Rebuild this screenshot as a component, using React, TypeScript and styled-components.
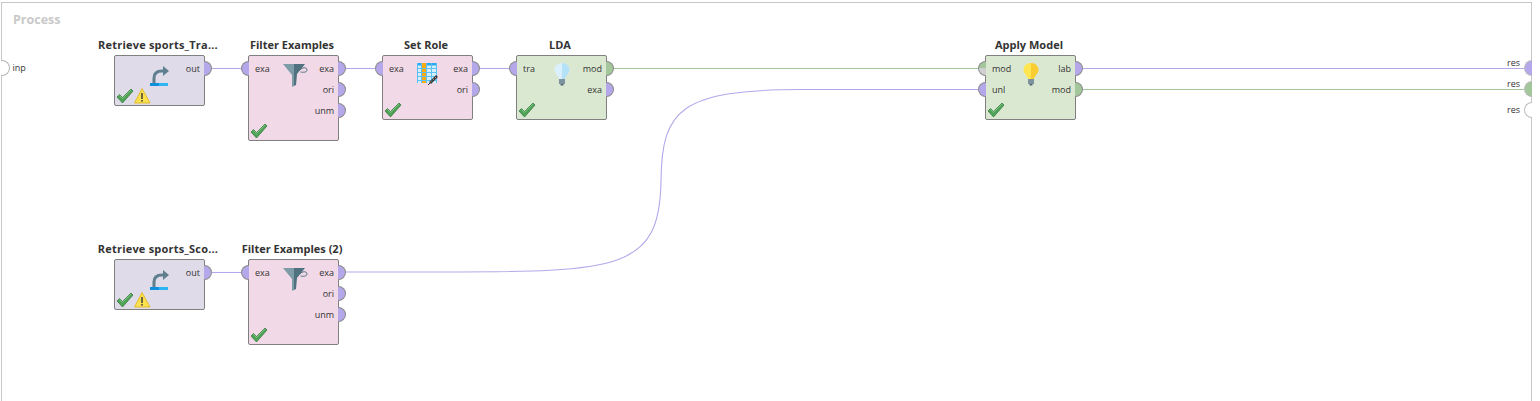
import React from "react";
import styled, { createGlobalStyle, css } from "styled-components";

type PortKind = "example" | "model" | "mixed" | "empty";
type NodeKind = "data" | "blending" | "modeling";
type IconName = "retrieve" | "filter" | "role" | "bulbBlue" | "bulbYellow";

interface IPort {
  label: string;
  kind: PortKind;
}

interface IOperator {
  title: string;
  x: number;
  y: number;
  height: number;
  kind: NodeKind;
  icon: IconName;
  warn?: boolean;
  inputs: IPort[];
  outputs: IPort[];
}

const ex = (label: string): IPort => ({ label, kind: "example" });

const operators: IOperator[] = [
  { title: "Retrieve sports_Tra...", x: 114, y: 55, height: 51, kind: "data", icon: "retrieve", warn: true, inputs: [], outputs: [ex("out")] },
  { title: "Filter Examples", x: 248, y: 55, height: 86, kind: "blending", icon: "filter", inputs: [ex("exa")], outputs: [ex("exa"), ex("ori"), ex("unm")] },
  { title: "Set Role", x: 382, y: 55, height: 65, kind: "blending", icon: "role", inputs: [ex("exa")], outputs: [ex("exa"), ex("ori")] },
  { title: "LDA", x: 516, y: 55, height: 65, kind: "modeling", icon: "bulbBlue", inputs: [ex("tra")], outputs: [{ label: "mod", kind: "model" }, ex("exa")] },
  { title: "Apply Model", x: 985, y: 55, height: 65, kind: "modeling", icon: "bulbYellow", inputs: [{ label: "mod", kind: "mixed" }, ex("unl")], outputs: [ex("lab"), { label: "mod", kind: "model" }] },
  { title: "Retrieve sports_Sco...", x: 114, y: 259, height: 51, kind: "data", icon: "retrieve", warn: true, inputs: [], outputs: [ex("out")] },
  { title: "Filter Examples (2)", x: 248, y: 259, height: 86, kind: "blending", icon: "filter", inputs: [ex("exa")], outputs: [ex("exa"), ex("ori"), ex("unm")] },
];

const sinks: { y: number; kind: PortKind; labelLift: number }[] = [
  { y: 68, kind: "example", labelLift: 5 },
  { y: 89, kind: "model", labelLift: 5 },
  { y: 110, kind: "empty", labelLift: 0 },
];

const PURPLE = "#b5a8ea";
const GREEN = "#a3c79a";

const GlobalStyle = createGlobalStyle`
  html, body {
    margin: 0;
    padding: 0;
    background: #ffffff;
    overflow: hidden;
  }
  body {
    font-family: "Open Sans", "Liberation Sans", sans-serif;
  }
`;

const Canvas = styled.main`
  position: relative;
  width: 1540px;
  height: 401px;
  background: #ffffff;
  overflow: hidden;
`;

const Frame = styled.div`
  position: absolute;
  left: 1px;
  top: 2px;
  width: 1531px;
  height: 399px;
  border-top: 1px solid #c8c8c8;
  border-left: 1px solid #c8c8c8;
  border-right: 1px solid #c8c8c8;
  box-sizing: border-box;
`;

const ProcessTitle = styled.h1`
  position: absolute;
  left: 13px;
  top: 12px;
  margin: 0;
  font-size: 12.5px;
  line-height: 16px;
  font-weight: 700;
  color: #c9c9c9;
`;

const Wires = styled.svg`
  position: absolute;
  left: 0;
  top: 0;
`;

const OperatorBox = styled.section<{ $x: number; $y: number }>`
  position: absolute;
  left: ${({ $x }) => $x}px;
  top: ${({ $y }) => $y - 18}px;
  width: 91px;
  display: flex;
  flex-direction: column;
  align-items: center;
`;

const OperatorTitle = styled.h2<{ $truncated: boolean }>`
  margin: 0;
  height: 18px;
  padding-right: 3px;
  font-size: 11px;
  line-height: 15px;
  font-weight: 700;
  letter-spacing: ${({ $truncated }) => ($truncated ? "0.2px" : "0")};
  color: #333333;
  white-space: nowrap;
`;

const nodeFills: Record<NodeKind, string> = {
  data: "#dfdbe9",
  blending: "#f1d9e7",
  modeling: "#dbe8d1",
};

const OperatorBody = styled.div<{ $kind: NodeKind; $height: number }>`
  position: relative;
  box-sizing: border-box;
  width: 91px;
  height: ${({ $height }) => $height}px;
  padding-top: 2px;
  display: flex;
  justify-content: space-between;
  background: ${({ $kind }) => nodeFills[$kind]};
  border: 1px solid #808080;
  border-radius: 2px;
`;

const PortColumn = styled.div`
  display: flex;
  flex-direction: column;
`;

const PortRow = styled.div<{ $side: "in" | "out" }>`
  position: relative;
  height: 21px;
  display: flex;
  align-items: center;
  font-size: 9px;
  color: #333333;
  ${({ $side }) =>
    $side === "in"
      ? css`
          padding-left: 6px;
          justify-content: flex-start;
        `
      : css`
          padding-right: 4px;
          justify-content: flex-end;
        `}
`;

const portFill = (kind: PortKind) => {
  if (kind === "model") return GREEN;
  if (kind === "mixed") return `linear-gradient(${GREEN} 50%, #cfcfcf 50%)`;
  if (kind === "empty") return "#ffffff";
  return PURPLE;
};

const PortDot = styled.span<{ $side: "in" | "out"; $kind: PortKind }>`
  position: absolute;
  top: 3px;
  box-sizing: border-box;
  width: 8px;
  height: 15px;
  background: ${({ $kind }) => portFill($kind)};
  border: 1px solid #8c8c8c;
  ${({ $side }) =>
    $side === "in"
      ? css`
          left: -8px;
          border-right: 0;
          border-radius: 8px 0 0 8px;
        `
      : css`
          right: -8px;
          border-left: 0;
          border-radius: 0 8px 8px 0;
        `}
`;

const IconSlot = styled.div`
  position: absolute;
  left: 33px;
  top: 6px;
  width: 24px;
  height: 24px;
`;

const StatusRow = styled.div`
  position: absolute;
  left: 1px;
  bottom: 1px;
  display: flex;
  align-items: flex-end;
`;

const InputPortLabel = styled.span`
  position: absolute;
  left: 12.5px;
  top: 61px;
  font-size: 9px;
  line-height: 14px;
  color: #333333;
`;

const InputPort = styled.span`
  position: absolute;
  left: 1px;
  top: 60px;
  box-sizing: border-box;
  width: 9px;
  height: 16px;
  background: #ffffff;
  border: 1.5px solid #b5b5b5;
  border-left: 0;
  border-radius: 0 8px 8px 0;
`;

const SinkLabel = styled.span<{ $y: number }>`
  position: absolute;
  right: 20px;
  top: ${({ $y }) => $y - 7}px;
  font-size: 9px;
  line-height: 14px;
  color: #333333;
`;

const SinkPort = styled.span<{ $y: number; $kind: PortKind }>`
  position: absolute;
  left: 1524px;
  top: ${({ $y }) => $y - 8}px;
  box-sizing: border-box;
  width: 8px;
  height: 16px;
  background: ${({ $kind }) => portFill($kind)};
  border: 1.5px solid #bdbdbd;
  border-right: 0;
  border-radius: 8px 0 0 8px;
`;

const Check = () => (
  <svg width="18" height="16" viewBox="0 0 18 16">
    <path
      d="M1 9 L3.5 6.5 L6.5 9.5 L15 1 L17 3 L6.5 15 Z"
      fill="#4fa356"
      stroke="#3b7d45"
      strokeWidth="0.8"
      strokeLinejoin="round"
    />
    <path d="M3.5 7.5 L6.5 10.5 L15 2" fill="none" stroke="#7cc47f" strokeWidth="1" />
  </svg>
);

const Warning = () => (
  <svg width="17" height="16" viewBox="0 0 17 16">
    <path d="M8 .5 L16 15 L.5 15 Z" fill="#fbe04f" stroke="#e3bd2c" strokeLinejoin="round" />
    <rect x="7.2" y="5" width="1.6" height="6" fill="#4a4a3a" />
    <rect x="7.2" y="12" width="1.6" height="1.6" fill="#4a4a3a" />
  </svg>
);

const RetrieveIcon = () => (
  <svg width="24" height="24" viewBox="0 0 24 24">
    <path d="M6 21 V16 C6 12 8 9 14 9 H16" fill="none" stroke="#5f7f8f" strokeWidth="3" />
    <path d="M15 4 L21 9 L15 14 Z" fill="#5f7f8f" />
    <rect x="2" y="21" width="9" height="3" fill="#0f8fdc" />
    <rect x="11" y="21" width="9" height="3" fill="#2eb6f4" />
  </svg>
);

const FilterIcon = () => (
  <svg width="24" height="24" viewBox="0 0 24 24" overflow="visible">
    <path d="M1 2 H12 V24 L10 25 V13 Z" fill="#7d9ca8" />
    <path d="M12 2 H23 L15 12 L14 23 L12 24 Z" fill="#50717f" />
    <path d="M18 8 C20 5 25 5 25 8 C25 10.5 21 10.5 18.5 10" fill="none" stroke="#50717f" strokeWidth="1" />
  </svg>
);

const RoleIcon = () => (
  <svg width="24" height="24" viewBox="0 0 24 24">
    <rect x="1" y="1" width="20" height="20" fill="#d5eefc" />
    <rect x="1" y="1" width="20" height="2.5" fill="#29a9ee" />
    <rect x="5" y="1" width="5" height="20" fill="#f9ab10" />
    {[6, 10, 14, 18].map((y) => (
      <rect key={y} x="1" y={y} width="20" height="1" fill="#5cc0f4" />
    ))}
    {[1, 5, 10, 15, 20].map((x) => (
      <rect key={x} x={x} y="1" width="1" height="20" fill="#5cc0f4" />
    ))}
    <path d="M14 21 L21 14" stroke="#333333" strokeWidth="2.6" />
    <path d="M14.5 20 L20.5 14.5" stroke="#ffffff" strokeWidth="0.7" strokeDasharray="1.5 1.5" />
    <path d="M12 23 L14 21" stroke="#333333" strokeWidth="1" />
  </svg>
);

const Bulb = ({ left, right }: { left: string; right: string }) => (
  <svg width="24" height="24" viewBox="0 0 24 24">
    <path d="M12 1 C7 1 4.5 4.5 4.5 8 C4.5 11.5 8 13 9 17 H12 Z" fill={left} />
    <path d="M12 1 C17 1 19.5 4.5 19.5 8 C19.5 11.5 16 13 15 17 H12 Z" fill={right} />
    <rect x="9" y="17" width="6" height="5" fill="#7c939d" />
    <rect x="10.5" y="22" width="3" height="1.5" fill="#4f6670" />
  </svg>
);

const icons: Record<IconName, React.ReactNode> = {
  retrieve: <RetrieveIcon />,
  filter: <FilterIcon />,
  role: <RoleIcon />,
  bulbBlue: <Bulb left="#daf0fc" right="#b5e1f8" />,
  bulbYellow: <Bulb left="#ffe650" right="#f9cd32" />,
};

const Operator: React.FC<{ op: IOperator }> = ({ op }) => (
  <OperatorBox $x={op.x} $y={op.y}>
    <OperatorTitle $truncated={op.title.endsWith("...")}>{op.title}</OperatorTitle>
    <OperatorBody $kind={op.kind} $height={op.height}>
      <PortColumn>
        {op.inputs.map((port) => (
          <PortRow key={port.label} $side="in">
            <PortDot $side="in" $kind={port.kind} />
            {port.label}
          </PortRow>
        ))}
      </PortColumn>
      <IconSlot>{icons[op.icon]}</IconSlot>
      <PortColumn>
        {op.outputs.map((port) => (
          <PortRow key={port.label} $side="out">
            {port.label}
            <PortDot $side="out" $kind={port.kind} />
          </PortRow>
        ))}
      </PortColumn>
      <StatusRow>
        <Check />
        {op.warn && <Warning />}
      </StatusRow>
    </OperatorBody>
  </OperatorBox>
);

const App: React.FC = () => (
  <>
    <GlobalStyle />
    <Canvas>
      <Frame />
      <ProcessTitle>Process</ProcessTitle>
      <Wires width="1540" height="401" fill="none" strokeWidth="1.1">
        <g stroke={PURPLE}>
          <path d="M212 68.5 H241" />
          <path d="M346 68.5 H375" />
          <path d="M480 68.5 H509" />
          <path d="M212 272.5 H241" />
          <path d="M1083 68.5 H1524" />
          <path d="M346 272 H440 C620 272 660 270 661 180 C662 110 680 90 800 89.5 H978" />
        </g>
        <g stroke={GREEN}>
          <path d="M614 68.5 H978" />
          <path d="M1083 89.5 H1524" />
        </g>
      </Wires>
      <InputPort />
      <InputPortLabel>inp</InputPortLabel>
      {operators.map((op) => (
        <Operator key={op.title} op={op} />
      ))}
      {sinks.map((sink) => (
        <React.Fragment key={sink.y}>
          <SinkLabel $y={sink.y - sink.labelLift}>res</SinkLabel>
          <SinkPort $y={sink.y} $kind={sink.kind} />
        </React.Fragment>
      ))}
    </Canvas>
  </>
);

export default App;
